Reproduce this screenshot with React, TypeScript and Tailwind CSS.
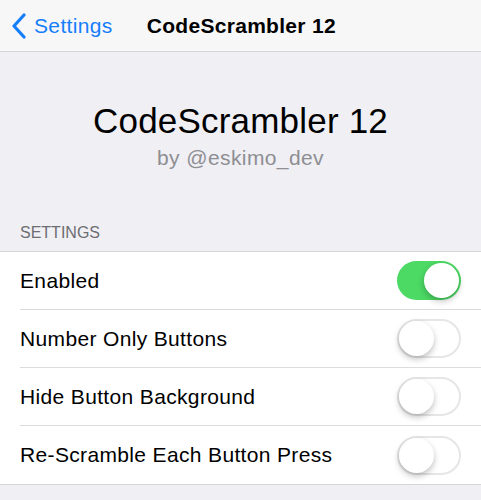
import React from 'react';

const font = { fontFamily: '"Liberation Sans", Arial, sans-serif' };

const rows = [
  { label: 'Enabled', on: true },
  { label: 'Number Only Buttons', on: false },
  { label: 'Hide Button Background', on: false },
  { label: 'Re-Scramble Each Button Press', on: false },
];

const Toggle = ({ on }: { on: boolean }) => (
  <div
    className={`relative h-[39px] w-[64px] rounded-full ${
      on ? 'bg-[#4cd964]' : 'bg-white border-2 border-[#e6e6e9]'
    }`}
  >
    <div
      className={`absolute h-[35px] w-[35px] rounded-full bg-white shadow-[0_3px_6px_rgba(0,0,0,0.25)] ${
        on ? 'right-[2px] top-[2px]' : 'left-0 top-0'
      }`}
    />
  </div>
);

const App = () => {
  return (
    <div className="min-h-[500px] w-[481px] bg-[#efeff4]" style={font}>
      {/* nav bar */}
      <div className="flex h-[52px] items-center border-b border-[#d6d6da] bg-[#f7f7f7]">
        <svg width="16" height="26" viewBox="0 0 16 26" className="ml-[11px]">
          <polyline points="13,2 3,13 13,24" fill="none" stroke="#157efb" strokeWidth="3.2" strokeLinecap="round" strokeLinejoin="round" />
        </svg>
        <span className="ml-[7px] text-[21px] tracking-[0.35px] text-[#157efb]">Settings</span>
        <span className="ml-[34px] text-[21px] font-bold tracking-[0.3px] text-black">CodeScrambler 12</span>
      </div>

      {/* header */}
      <div className="flex flex-col items-center pt-[48px]">
        <h1 className="text-[35px] leading-[42px] tracking-[0.2px] text-black">CodeScrambler 12</h1>
        <p className="mt-[3px] text-[21px] leading-[25px] tracking-[0.4px] text-[#8e8e93]">by @eskimo_dev</p>
      </div>

      <div className="mt-[53px] pl-[20px] text-[16px] leading-[20px] text-[#6d6d72]">SETTINGS</div>

      {/* table */}
      <div className="mt-[8px] border-y border-[#d6d6da] bg-white">
        {rows.map((r, i) => (
          <div key={r.label} className="pl-[20px]">
            <div
              className={`flex h-[58px] items-center justify-between pr-[20px] ${
                i < rows.length - 1 ? 'border-b border-[#dcdce0]' : ''
              }`}
            >
              <span className="text-[21px] tracking-[0.35px] text-black">{r.label}</span>
              <Toggle on={r.on} />
            </div>
          </div>
        ))}
      </div>
    </div>
  );
};

export default App;
